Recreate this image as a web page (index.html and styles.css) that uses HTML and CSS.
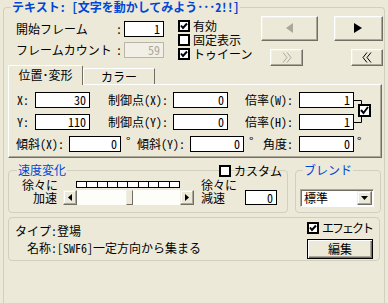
FILE: index.html
```html
<!DOCTYPE html>
<html>
<head>
  <meta charset="UTF-8">
  <title>テキスト</title>
  <link rel="stylesheet" href="styles.css">
</head>
<body>
  <fieldset class="frame">
    <legend class="frame-title">テキスト: [文字を動かしてみよう･･･2！！]</legend>

    <div class="top">
      <div class="frames">
        <div class="frame-row">
          <span class="frame-label">開始フレーム</span>
          <span class="colon">:</span>
          <span class="field frame-field">1</span>
        </div>
        <div class="frame-row">
          <span class="frame-label">フレームカウント</span>
          <span class="colon">:</span>
          <span class="field frame-field disabled">59</span>
        </div>
      </div>

      <div class="checks">
        <div class="check"><span class="box"><svg class="tick" viewBox="0 0 8 8"><path d="M1 3.5L3 6L7 1.5"/></svg></span>有効</div>
        <div class="check"><span class="box"></span>固定表示</div>
        <div class="check"><span class="box"><svg class="tick" viewBox="0 0 8 8"><path d="M1 3.5L3 6L7 1.5"/></svg></span>トゥイーン</div>
      </div>

      <div class="nav">
        <div class="nav-row">
          <button class="btn btn-prev" disabled>
            <svg width="9" height="11" viewBox="0 0 9 11"><polygon points="8,0 8,10 1,5" class="arrow-off"/></svg>
          </button>
          <button class="btn btn-next">
            <svg width="9" height="11" viewBox="0 0 9 11"><polygon points="0,0 0,10 8,5"/></svg>
          </button>
        </div>
        <div class="nav-row">
          <button class="btn btn-ff" disabled>
            <svg class="chev off" width="10" height="11" viewBox="0 0 10 11"><path d="M1 0.5L5 5.5L1 10.5M5 0.5L9 5.5L5 10.5"/></svg>
          </button>
          <button class="btn btn-rw">
            <svg class="chev" width="10" height="11" viewBox="0 0 10 11"><path d="M5 0.5L1 5.5L5 10.5M9 0.5L5 5.5L9 10.5"/></svg>
          </button>
        </div>
      </div>
    </div>

    <div class="tabs">
      <div class="tab active">位置･変形</div>
      <div class="tab">カラー</div>
    </div>

    <div class="pane">
      <div class="pair">
        <div class="pair-rows">
          <div class="pane-row">
            <span class="lbl lbl-xy">X:</span>
            <span class="field num">30</span>
            <span class="lbl lbl-ctrl">制御点(X):</span>
            <span class="field num">0</span>
            <span class="lbl lbl-scale">倍率(W):</span>
            <span class="field num">1</span>
          </div>
          <div class="pane-row">
            <span class="lbl lbl-xy">Y:</span>
            <span class="field num">110</span>
            <span class="lbl lbl-ctrl">制御点(Y):</span>
            <span class="field num">0</span>
            <span class="lbl lbl-scale">倍率(H):</span>
            <span class="field num">1</span>
          </div>
        </div>
        <svg class="link" width="18" height="38" viewBox="0 0 18 38">
          <path d="M0 8.5H7.5V13M0 30.5H7.5V25" fill="none" stroke="#000"/>
          <rect x="5" y="13" width="11" height="11" fill="#fff" stroke="#000" stroke-width="2"/>
          <path d="M7 18L9.5 21L14 15" fill="none" stroke="#000" stroke-width="2"/>
        </svg>
      </div>
      <div class="pane-row">
        <span class="lbl lbl-skew">傾斜(X):</span>
        <span class="field num-s">0</span>
        <span class="deg">°</span>
        <span class="lbl lbl-skew2">傾斜(Y):</span>
        <span class="field num-m">0</span>
        <span class="deg deg-wide">°</span>
        <span class="lbl lbl-angle">角度:</span>
        <span class="field num">0</span>
        <span class="deg deg-last">°</span>
      </div>
    </div>

    <div class="groups">
      <fieldset class="group speed">
        <legend class="group-title">速度変化
          <span class="custom"><span class="box"></span>カスタム</span>
        </legend>
        <div class="speed-body">
          <div class="accel">
            <div class="speed-row">
              <span class="speed-lbl">徐々に</span>
              <div class="ticks">
                <span></span><span></span><span></span><span></span><span></span>
                <span></span><span></span><span></span><span></span><span></span>
              </div>
            </div>
            <div class="speed-row tall">
              <span class="speed-lbl accel-lbl">加速</span>
              <div class="scroll">
                <span class="sb-btn"><svg width="4" height="7" viewBox="0 0 4 7"><polygon points="4,0 4,7 0,3.5"/></svg></span>
                <span class="sb-track"><span class="sb-thumb"></span></span>
                <span class="sb-btn"><svg width="4" height="7" viewBox="0 0 4 7"><polygon points="0,0 0,7 4,3.5"/></svg></span>
              </div>
            </div>
          </div>
          <div class="decel">
            <div class="speed-row">徐々に</div>
            <div class="speed-row tall">
              <span class="decel-lbl">減速</span>
              <span class="field decel-field">0</span>
            </div>
          </div>
        </div>
      </fieldset>

      <fieldset class="group blend">
        <legend class="group-title blend-title">ブレンド</legend>
        <div class="select">
          <span class="select-text">標準</span>
          <span class="select-btn"><svg width="7" height="4" viewBox="0 0 7 4"><polygon points="0,0 7,0 3.5,4"/></svg></span>
        </div>
      </fieldset>
    </div>

    <fieldset class="group effect">
      <div class="effect-body">
        <div class="info">
          <div class="info-line">タイプ：登場</div>
          <div class="info-line info-name">名称：[SWF6]一定方向から集まる</div>
        </div>
        <div class="effect-side">
          <div class="check effect-check"><span class="box"><svg class="tick" viewBox="0 0 8 8"><path d="M1 3.5L3 6L7 1.5"/></svg></span>エフェクト</div>
          <button class="btn btn-default">編集</button>
        </div>
      </div>
    </fieldset>
  </fieldset>
</body>
</html>
```

FILE: styles.css
```css
* {
  margin: 0;
  padding: 0;
  box-sizing: border-box;
}

body {
  width: 388px;
  height: 303px;
  overflow: hidden;
  background: #ECE9D8;
  color: #000;
  font-family: "Noto Sans CJK JP", sans-serif;
  font-size: 12px;
  line-height: 12px;
  font-feature-settings: "hwid";
}

fieldset {
  min-width: 0;
}

.frame {
  margin-left: 3px;
  width: 382px;
  height: 303px;
  border: 1px solid #D0D0BF;
  border-bottom: none;
  border-radius: 4px 4px 0 0;
}

.frame-title {
  margin-left: 7px;
  padding: 0 1px;
  color: #0046D5;
  font-weight: bold;
  line-height: 14px;
}

/* top area */

.top {
  display: flex;
  height: 51px;
}

.frames {
  margin-left: 12px;
  padding-top: 7px;
  width: 148px;
}

.frame-row {
  display: flex;
  align-items: center;
  height: 16px;
}

.frame-row + .frame-row {
  margin-top: 5px;
}

.frame-label {
  width: 100px;
}

.colon {
  width: 8px;
}

.field {
  display: block;
  height: 16px;
  border: 1px solid #000;
  background: #fff;
  text-align: right;
  padding-right: 3px;
  line-height: 14px;
}

.field.disabled {
  border-color: #B9B6A8;
  background: #F2F0E6;
  color: #ACA899;
}

.frame-field {
  width: 40px;
}

.checks {
  margin-left: 14px;
  padding-top: 5px;
  width: 83px;
}

.check {
  display: flex;
  align-items: center;
  height: 14px;
  white-space: nowrap;
}

.box {
  display: flex;
  align-items: center;
  justify-content: center;
  flex: none;
  width: 12px;
  height: 12px;
  border: 2px solid #000;
  background: #fff;
  margin-right: 3px;
}

.tick {
  width: 8px;
  height: 8px;
  fill: none;
  stroke: #000;
  stroke-width: 2;
}

.nav {
  padding-top: 2px;
}

.nav-row {
  display: flex;
}

.nav-row + .nav-row {
  margin-top: 8px;
}

.btn {
  display: flex;
  align-items: center;
  justify-content: center;
  background: #ECE9D8;
  border: 1px solid;
  border-color: #fff #716F64 #716F64 #fff;
  box-shadow: inset -1px -1px #ACA899, inset 1px 1px #F1EFE2;
  font: inherit;
  color: #000;
}

.btn-prev {
  width: 57px;
  height: 25px;
}

.btn-next {
  width: 49px;
  height: 25px;
  margin-left: 16px;
}

.btn-ff {
  width: 33px;
  height: 17px;
  margin-left: 9px;
}

.btn-rw {
  width: 32px;
  height: 17px;
  margin-left: 48px;
}

.arrow-off {
  fill: #ACA899;
}

.chev {
  fill: none;
  stroke: #000;
}

.chev.off {
  stroke: #ACA899;
}

/* tabs */

.tabs {
  position: relative;
  z-index: 1;
  display: flex;
  align-items: flex-end;
  height: 20px;
  margin-left: 4px;
  margin-bottom: -1px;
}

.tab {
  width: 72px;
  height: 16px;
  margin-bottom: 1px;
  border: 1px solid;
  border-color: #fff #716F64 transparent #fff;
  border-bottom: none;
  background: #ECE9D8;
  text-align: center;
  line-height: 15px;
}

.tab.active {
  width: 75px;
  height: 20px;
  margin-bottom: 0;
  border-radius: 2px 2px 0 0;
  line-height: 18px;
}

.pane {
  width: 374px;
  height: 74px;
  margin-left: 4px;
  padding-top: 7px;
  border: 1px solid;
  border-color: #fff #716F64 #716F64 #fff;
  box-shadow: inset -1px -1px #ACA899;
}

.pair {
  display: flex;
}

.pane-row {
  display: flex;
  align-items: center;
  height: 16px;
}

.pane-row + .pane-row,
.pair + .pane-row {
  margin-top: 6px;
}

.link {
  display: block;
}

.lbl-xy {
  margin-left: 8px;
  width: 18px;
}

.lbl-ctrl {
  margin-left: 18px;
  width: 65px;
}

.lbl-scale {
  margin-left: 17px;
  width: 54px;
}

.lbl-skew {
  margin-left: 7px;
  width: 53px;
}

.lbl-skew2 {
  width: 53px;
}

.lbl-angle {
  width: 36px;
}

.num {
  width: 55px;
}

.num-s {
  width: 52px;
}

.num-m {
  width: 54px;
}

.deg {
  align-self: flex-start;
  margin-left: 5px;
  width: 11px;
  line-height: 10px;
}

.deg-wide {
  width: 14px;
}

.deg-last {
  margin-left: 3px;
}

/* lower groups */

.groups {
  display: flex;
  margin-top: 5px;
  margin-left: 4px;
}

.group {
  height: 50px;
  border: 1px solid #D0D0BF;
  border-radius: 4px;
}

.group-title {
  position: relative;
  margin-left: 8px;
  padding: 0 1px;
  color: #0046D5;
  line-height: 14px;
}

.speed {
  width: 280px;
}

.custom {
  position: absolute;
  left: 202px;
  top: 1px;
  display: flex;
  align-items: center;
  color: #000;
  white-space: nowrap;
}

.speed-body {
  display: flex;
  padding-top: 2px;
}

.speed-row {
  display: flex;
  align-items: center;
  height: 11px;
  white-space: nowrap;
}

.speed-row.tall {
  height: 15px;
}

.speed-lbl {
  margin-left: 13px;
  width: 54px;
}

.accel-lbl {
  margin-left: 24px;
  width: 30px;
}

.ticks {
  display: flex;
  width: 104px;
  height: 7px;
  border: 1px solid #000;
  background: #fff;
}

.ticks span {
  flex: 1;
}

.ticks span + span {
  border-left: 1px solid #000;
}

.scroll {
  display: flex;
  width: 131px;
  height: 15px;
}

.sb-btn {
  display: flex;
  align-items: center;
  justify-content: center;
  width: 14px;
  height: 15px;
  border: 1px solid;
  border-color: #F1EFE2 #716F64 #716F64 #F1EFE2;
  box-shadow: inset -1px -1px #ACA899, inset 1px 1px #fff;
  background: #ECE9D8;
}

.sb-track {
  display: flex;
  flex: 1;
  background: #FDFDFA;
}

.sb-thumb {
  width: 7px;
  margin-left: 49px;
  border: 1px solid;
  border-color: #F1EFE2 #716F64 #716F64 #F1EFE2;
  background: #ECE9D8;
}

.decel {
  margin-left: 7px;
}

.decel-lbl {
  width: 44px;
}

.decel-field {
  width: 32px;
  height: 15px;
  line-height: 13px;
}

.blend {
  width: 86px;
  margin-left: 7px;
}

.blend-title {
  margin-left: 7px;
}

.select {
  display: flex;
  align-items: center;
  width: 74px;
  height: 18px;
  margin: 12px 0 0 4px;
  border: 1px solid;
  border-color: #ACA899 #fff #fff #ACA899;
  box-shadow: inset 1px 1px #716F64;
  background: #fff;
}

.select-text {
  flex: 1;
  padding-left: 3px;
}

.select-btn {
  display: flex;
  align-items: center;
  justify-content: center;
  width: 15px;
  height: 14px;
  margin-right: 1px;
  border: 1px solid;
  border-color: #F1EFE2 #716F64 #716F64 #F1EFE2;
  box-shadow: inset -1px -1px #ACA899, inset 1px 1px #fff;
  background: #ECE9D8;
}

.effect {
  width: 372px;
  height: 44px;
  margin: 4px 0 0 4px;
}

.effect-body {
  display: flex;
}

.info {
  flex: 1;
  padding: 4px 0 0 6px;
}

.info-line {
  line-height: 17px;
}

.info-name {
  padding-left: 12px;
}

.effect-side {
  width: 66px;
  margin-right: 6px;
  padding-top: 3px;
}

.effect-check {
  letter-spacing: -2px;
}

.btn-default {
  width: 66px;
  height: 20px;
  margin-top: 4px;
  border: 1px solid #000;
  box-shadow: inset 1px 1px #fff, inset -1px -1px #716F64, inset -2px -2px #ACA899;
}
```
